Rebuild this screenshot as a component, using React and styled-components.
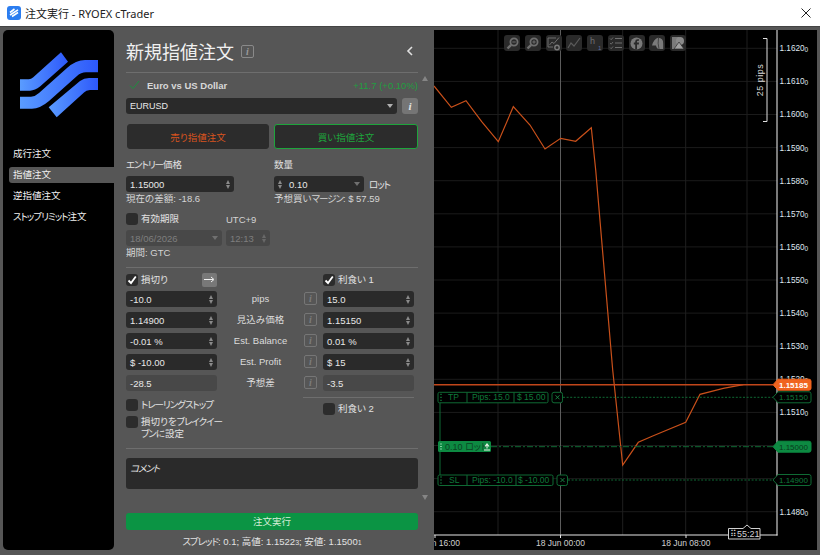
import React from "react";
import styled, { createGlobalStyle } from "styled-components";

const GlobalStyle = createGlobalStyle`
  html, body { margin: 0; padding: 0; background: #565656; }
  body {
    font-family: "Liberation Sans", "Noto Sans CJK JP", sans-serif;
    font-size: 9.5px;
    font-feature-settings: "palt";
    color: #e2e2e2;
  }
`;

const Shell = styled.div`
  width: 820px;
  height: 555px;
  display: flex;
  flex-direction: column;
  overflow: hidden;
`;

const TitleBar = styled.div`
  height: 26px;
  background: #fff;
  display: flex;
  align-items: center;
  padding: 0 9px 0 7px;
  gap: 4px;
  color: #222;
  font-size: 11px;
  font-family: "Noto Sans", "Noto Sans CJK JP", sans-serif;
`;

const TitleText = styled.span`
  flex: 1;
`;

const Body = styled.div`
  flex: 1;
  display: flex;
  padding: 3px 3px 5px 3px;
  background: #565656;
  border-top: 1px solid #444;
  min-height: 0;
`;

const Sidebar = styled.nav`
  width: 111px;
  background: #000;
  border-radius: 5px;
  padding-top: 22px;
  box-sizing: border-box;
`;

const LogoWrap = styled.div`
  padding-left: 17px;
  height: 66px;
  margin-bottom: 28px;
`;

const NavList = styled.div`
  display: flex;
  flex-direction: column;
  gap: 5px;
  padding-left: 6px;
`;

const NavItem = styled.div`
  height: 16px;
  line-height: 16px;
  padding-left: 4px;
  color: #f0f0f0;
  border-radius: 3px 0 0 3px;
  background: ${(p) => (p.$active ? "#565656" : "transparent")};
`;

const Narrow = styled.span`
  letter-spacing: -1px;
`;

const Panel = styled.div`
  position: relative;
  width: 320px;
  padding: 0 16px 0 12px;
  box-sizing: border-box;
`;

const Header = styled.div`
  height: 42px;
  display: flex;
  align-items: center;
  gap: 7px;
  border-bottom: 1px solid #6e6e6e;
`;

const Heading = styled.h1`
  margin: 0;
  font-size: 18px;
  font-weight: 400;
  color: #f0f0f0;
  font-feature-settings: normal;
`;

const BackChevron = styled.svg`
  margin-left: auto;
  margin-right: 4px;
`;

const InfoBadge = styled.span`
  width: 13px;
  height: 13px;
  flex: none;
  box-sizing: border-box;
  border: 1px solid #8a8a8a;
  border-radius: 2px;
  color: #9a9a9a;
  font: italic 700 10px/11px "Liberation Serif", serif;
  text-align: center;
  display: inline-block;
`;

const SymbolRow = styled.div`
  margin-top: 5px;
  height: 14px;
  display: flex;
  align-items: center;
  padding-left: 3px;
`;

const SymbolName = styled.span`
  margin-left: 7px;
  flex: 1;
  font-weight: 700;
  color: #d8d8d8;
`;

const Change = styled.span`
  color: #1f9f40;
`;

const SelectRow = styled.div`
  margin-top: 6px;
  display: flex;
  gap: 5px;
  font-size: 9px;
`;

const Field = styled.div`
  height: 16px;
  width: ${(p) => p.$w || "100%"};
  flex: ${(p) => (p.$grow ? 1 : "none")};
  box-sizing: border-box;
  border-radius: 3px;
  background: ${(p) => (p.$off || p.$plain ? "#484848" : "#2a2a2a")};
  color: ${(p) => (p.$off ? "#7e7e7e" : "#e8e8e8")};
  display: flex;
  align-items: center;
  padding: 0 4px;
  gap: 4px;
`;

const FieldValue = styled.span`
  flex: 1;
  white-space: nowrap;
  margin-left: ${(p) => p.$indent || 0}px;
`;

const Caret = styled.span`
  width: 0;
  height: 0;
  border-left: 3px solid transparent;
  border-right: 3px solid transparent;
  border-top: 4px solid ${(p) => (p.$dim ? "#707070" : "#b0b0b0")};
`;

const StepperBox = styled.span`
  display: flex;
  flex-direction: column;
  gap: 1px;
`;

const StepUp = styled.span`
  width: 0;
  height: 0;
  border-left: 2.5px solid transparent;
  border-right: 2.5px solid transparent;
  border-bottom: 4px solid ${(p) => (p.$dim ? "#686868" : "#8a8a8a")};
`;

const StepDown = styled(StepUp)`
  border-bottom: 0;
  border-top: 4px solid ${(p) => (p.$dim ? "#686868" : "#8a8a8a")};
`;

const InfoButton = styled.span`
  width: 16px;
  height: 16px;
  border-radius: 3px;
  background: #757575;
  color: #e4e4e4;
  font: italic 700 11px/16px "Liberation Serif", serif;
  text-align: center;
`;

const SideTabs = styled.div`
  margin-top: 10px;
  margin-left: 1px;
  display: flex;
  gap: 5px;
`;

const SideTab = styled.div`
  height: 25px;
  box-sizing: border-box;
  width: ${(p) => p.$w};
  background: #2c2c2c;
  border-radius: 3px;
  border: 1px solid ${(p) => (p.$active ? "#1ea53c" : "#2c2c2c")};
  color: ${(p) => p.$color};
  display: flex;
  align-items: center;
  justify-content: center;
`;

const OrderGrid = styled.div`
  margin-top: 9px;
  display: grid;
  grid-template-columns: 148px 1fr;
`;

const FormColumn = styled.div`
  display: flex;
  flex-direction: column;
`;

const FieldLabel = styled.div`
  height: 14px;
  line-height: 14px;
  margin-bottom: 4px;
`;

const Hint = styled.div`
  height: 12px;
  line-height: 12px;
  margin-top: 1px;
  color: #d4d4d4;
`;

const InlineRow = styled.div`
  display: flex;
  align-items: center;
  gap: 5px;
`;

const ExpiryHead = styled.div`
  margin-top: 7px;
  height: 14px;
  display: flex;
  align-items: center;
`;

const UtcLabel = styled.span`
  margin-left: auto;
  width: 192px;
  color: #d4d4d4;
`;

const ExpiryFields = styled.div`
  margin-top: 4px;
  display: flex;
  gap: 4px;
`;

const Divider = styled.div`
  height: 1px;
  background: #6e6e6e;
  margin-top: ${(p) => p.$mt}px;
`;

const CheckLabel = styled.label`
  display: flex;
  align-items: ${(p) => (p.$top ? "flex-start" : "center")};
  gap: 3px;
  color: #e2e2e2;
  line-height: 12px;
  white-space: nowrap;
`;

const Box = styled.span`
  width: 12px;
  height: 12px;
  flex: none;
  background: #2c2c2c;
  border-radius: 3px;
  display: flex;
  align-items: center;
  justify-content: center;
`;

const ProtectionGrid = styled.div`
  margin-top: ${(p) => p.$mt}px;
  display: grid;
  grid-template-columns: 91px 87px 13px 91px;
  row-gap: 5px;
`;

const GridCell = styled.div`
  grid-column: ${(p) => p.$col};
  grid-row: 1;
  display: flex;
  align-items: center;
  height: 15px;
  justify-content: space-between;
  padding-left: ${(p) => p.$indent || 0}px;
`;

const RowLabel = styled.div`
  height: 16px;
  line-height: 15px;
  text-align: center;
  white-space: nowrap;
  color: #dcdcdc;
`;

const RowInfo = styled(InfoBadge)`
  margin-top: 1px;
  color: #7c7c7c;
  border-color: #767676;
`;

const RightInput = styled(Field)`
  margin-left: 6px;
`;

const ArrowButton = styled.span`
  width: 15px;
  height: 14px;
  border-radius: 2px;
  background: #787878;
  display: flex;
  align-items: center;
  justify-content: center;
`;

const ExtrasRow = styled.div`
  display: grid;
  grid-template-columns: 177px 111px;
`;

const ExtrasLeft = styled.div`
  margin-top: 8px;
  display: flex;
  flex-direction: column;
  gap: 5px;
`;

const ExtrasRight = styled.div`
  margin-top: 6px;
`;

const ExtrasCheck = styled.div`
  margin: 5px 0 0 20px;
`;

const Comment = styled.div`
  margin-top: 9px;
  height: 31px;
  box-sizing: border-box;
  background: #2a2a2a;
  border-radius: 3px;
  padding: 3px 4px;
  font-style: italic;
  color: #e8e8e8;
`;

const SubmitButton = styled.div`
  margin-top: 24px;
  height: 17px;
  line-height: 17px;
  background: #0b9444;
  border-radius: 3px;
  text-align: center;
  color: #d8efd8;
`;

const Stats = styled.div`
  margin-top: 4px;
  text-align: center;
  color: #e2e2e2;
`;

const Small = styled.span`
  font-size: 7px;
`;

const ScrollArrow = styled.span`
  position: absolute;
  right: 6px;
  top: ${(p) => p.$top}px;
  width: 0;
  height: 0;
  border-left: 3px solid transparent;
  border-right: 3px solid transparent;
  ${(p) => (p.$down ? "border-top: 5px solid #858585;" : "border-bottom: 5px solid #858585;")}
`;

const Chart = styled.div`
  position: relative;
  width: 383px;
  background: #000;
  overflow: hidden;
  flex: none;
`;

const ChartSvg = styled.svg`
  display: block;
  font-family: "Liberation Sans", "Noto Sans CJK JP", sans-serif;
  font-feature-settings: "palt";
`;

const ChartToolbar = styled.div`
  position: absolute;
  left: 70px;
  top: 5px;
  display: flex;
  gap: 4.75px;
`;

const ToolButton = styled.span`
  width: 16px;
  height: 16px;
  border-radius: 3px;
  background: #2a2a2a;
  display: flex;
  align-items: center;
  justify-content: center;
  & > svg { opacity: 0.72; }
`;

const Logo = () => (
  <svg width="78" height="66" viewBox="20 52 78 66">
    <defs>
      <linearGradient id="band" x1="0" x2="1" y1="0" y2="0">
        <stop offset="0" stopColor="#5a9cff" />
        <stop offset="1" stopColor="#2d58fb" />
      </linearGradient>
    </defs>
    <path fill="url(#band)" d="M20 79.3 H29 Q31 79.3 33 77.6 L61 52.3 L68 61.7 L40 86.6 Q35 90.7 30 90.7 H20 Z" />
    <path fill="url(#band)" d="M20 96.7 H31 Q35 96.7 39 93 L67 68 Q76 60 85 60 H98 V72.3 H86 Q81 72.3 77 76 L49 101 Q40 108.7 32 108.7 H20 Z" />
    <path fill="url(#band)" d="M98 78 H89 Q84 78 80 81 L48.7 107.3 L56.7 117.3 L84 92.5 Q86 90 90 90 H98 Z" />
  </svg>
);

const AppIcon = () => (
  <svg width="14" height="14" viewBox="0 0 14 14">
    <rect width="14" height="14" rx="3" fill="#2b7df0" />
    <path d="M3 6.5 L7.5 3 M3 9 L11 3.8 M5 10.5 L11 6.5" stroke="#fff" strokeWidth="1.6" fill="none" />
  </svg>
);

const CheckMark = () => (
  <svg width="10" height="10" viewBox="0 0 10 10">
    <path d="M1.5 5.5 L4 8 L8.8 1.5" stroke="#fff" strokeWidth="1.8" fill="none" />
  </svg>
);

const CheckBox = ({ checked, children, top }) => (
  <CheckLabel $top={top}>
    <Box>{checked && <CheckMark />}</Box>
    <span>{children}</span>
  </CheckLabel>
);

const Stepper = ({ dim }) => (
  <StepperBox>
    <StepUp $dim={dim} />
    <StepDown $dim={dim} />
  </StepperBox>
);

const rows = [
  { left: "-10.0", label: "pips", right: "15.0" },
  { left: "1.14900", label: "見込み価格", right: "1.15150" },
  { left: "-0.01 %", label: "Est. Balance", right: "0.01 %" },
  { left: "$ -10.00", label: "Est. Profit", right: "$ 15" },
  { left: "-28.5", label: "予想差", right: "-3.5", plain: true },
];

const ZoomIcon = ({ plus }) => (
  <svg width="13" height="13" viewBox="0 0 13 13">
    <circle cx="8" cy="5" r="3.6" fill="none" stroke="#8a8a8a" strokeWidth="1.8" />
    <path d="M5.2 7.8 L1.5 11.5" stroke="#8a8a8a" strokeWidth="2.4" />
    <path d={plus ? "M6.3 5 H9.7 M8 3.3 V6.7" : "M6.3 5 H9.7"} stroke="#8a8a8a" strokeWidth="1" />
  </svg>
);

const tools = [
  <ZoomIcon key="out" />,
  <ZoomIcon key="in" plus />,
  <svg key="cfg" width="15" height="15" viewBox="0 0 15 15">
    <path d="M10 2 H2 V11 H7" fill="none" stroke="#8a8a8a" strokeWidth="1" />
    <path d="M3.5 9 L6 6 L8 7.5 L13 1.5" fill="none" stroke="#8a8a8a" strokeWidth="1" />
    <circle cx="11" cy="11.5" r="2.2" fill="none" stroke="#9a9a9a" strokeWidth="1.4" />
  </svg>,
  <svg key="line" width="14" height="14" viewBox="0 0 14 14">
    <path d="M1 12 L4 7 L7 10 L13 2" fill="none" stroke="#6e6e6e" strokeWidth="1.2" />
  </svg>,
  <svg key="tf" width="15" height="15" viewBox="0 0 15 15">
    <text x="2" y="8" fontSize="9" fill="#8a8a8a" fontFamily="Liberation Sans">h</text>
    <text x="10" y="14" fontSize="6" fill="#6f86c8" fontFamily="Liberation Sans">1</text>
  </svg>,
  <svg key="list" width="14" height="14" viewBox="0 0 14 14">
    <path d="M1 2.5 L2.2 3.7 L4 1.5 M1 7 L2.2 8.2 L4 6 M1 11.5 L2.2 12.7 L4 10.5" fill="none" stroke="#8a8a8a" strokeWidth="0.9" />
    <path d="M6 2.5 H13 M6 7 H13 M6 11.5 H13" stroke="#8a8a8a" strokeWidth="1" />
  </svg>,
  <svg key="fb" width="13" height="13" viewBox="0 0 13 13">
    <circle cx="6.5" cy="6.5" r="6" fill="#9a9a9a" />
    <path d="M7 12.5 V7.5 H8.8 L9 5.6 H7 V4.6 Q7 3.7 8 3.7 H9 V2.2 H7.6 Q5.2 2.2 5.2 4.5 V5.6 H3.8 V7.5 H5.2 V12.5 Z" fill="#2b2b2b" />
  </svg>,
  <svg key="head" width="13" height="13" viewBox="0 0 13 13">
    <path d="M7 0.8 Q12.4 1 12.2 6.5 L12.2 12 H7 Q5 10 5 8.5 L1 8.5 Q2.5 2.5 7 0.8 Z" fill="#9a9a9a" />
    <path d="M7.5 1 Q6.5 6 8 12" stroke="#2b2b2b" strokeWidth="0.7" fill="none" />
  </svg>,
  <svg key="shapes" width="14" height="14" viewBox="0 0 14 14">
    <rect x="1" y="1" width="7" height="12" fill="#9a9a9a" />
    <circle cx="9" cy="5" r="4" fill="#b0b0b0" />
    <path d="M3 13 L8 6 L13 13 Z" fill="#d0d0d0" stroke="#2b2b2b" strokeWidth="0.7" />
  </svg>,
];

const priceLine =
  "434,86 451.3,107.3 466,100.7 481.7,121.7 498.3,141.7 513.3,106.7 530,125 545,149 560.7,138.3 575.7,141.3 591.3,127.7 595.7,170 612.7,370 622.7,465 638.3,442.3 653.3,435.7 685.7,422.3 700,394.3 723.3,388.3 743.3,384.7";

const gridX = [498, 622.7, 685.7, 747];
const ticks = [
  "1.1620", "1.1610", "1.1600", "1.1590", "1.1580", "1.1570", "1.1560", "1.1550",
  "1.1540", "1.1530", "1.1520", "1.1510", null, null, "1.1480",
];

const orderGreen = "#0f6a34";

const OrderTag = ({ y, cells, closeX, endX }) => {
  let x = 438;
  return (
    <g fontSize="8.5" fill="#0f7a3a">
      <rect x="438" y={y - 5} width={endX - 438} height="10.5" rx="1.5" fill="#000" stroke={orderGreen} />
      {cells.map(([w, label, pad]) => {
        const cx = x + pad;
        x += w;
        return (
          <g key={label}>
            <text x={cx} y={y + 3}>{label}</text>
            {x < endX - 1 && <line x1={x} x2={x} y1={y - 5} y2={y + 5.5} stroke={orderGreen} />}
          </g>
        );
      })}
      <path d={`M440 ${y - 3} h2 M440 ${y} h2 M440 ${y + 3} h2`} stroke={orderGreen} />
      <rect x={closeX} y={y - 5} width="10.5" height="10.5" rx="2" fill="#000" stroke={orderGreen} />
      <path d={`M${closeX + 3.5} ${y - 2} l4 4 m0 -4 l-4 4`} stroke="#1c8f4a" strokeWidth="0.9" />
      <line x1={closeX + 11} x2="773" y1={y} y2={y} stroke={orderGreen} strokeDasharray="2 1.6" />
    </g>
  );
};

const PriceTag = ({ y, fill, stroke, color, label, bold }) => (
  <g>
    <path
      d={`M773 ${y} L778 ${y - 5.5} H809 Q811 ${y - 5.5} 811 ${y - 3.5} V${y + 3.5} Q811 ${y + 5.5} 809 ${y + 5.5} H778 Z`}
      fill={fill}
      stroke={stroke}
    />
    <text x="779" y={y + 3} fontSize="8" fill={color} fontWeight={bold ? 700 : 400}>{label}</text>
  </g>
);

const ChartDrawing = () => (
  <ChartSvg width="383" height="520" viewBox="434 30 383 520">
    {ticks.map((t, i) => (
      <line key={i} x1="434" x2="777" y1={48.3 + 33.1 * i} y2={48.3 + 33.1 * i} stroke="#1b1b1b" />
    ))}
    {gridX.map((x) => (
      <line key={x} x1={x} x2={x} y1="30" y2="535" stroke="#1f1f1f" />
    ))}
    <line x1="560.5" x2="560.5" y1="30" y2="535" stroke="#5c5c5c" />

    <path d="M440 397 V480" stroke={orderGreen} fill="none" />
    <polyline points={priceLine} fill="none" stroke="#c9501a" strokeWidth="1.2" />
    <line x1="434" x2="773" y1="384.7" y2="384.7" stroke="#c2461a" strokeWidth="1.6" />

    <OrderTag
      y={397.3}
      endX={548}
      closeX={552}
      cells={[[29, "TP", 10], [47, "Pips: 15.0", 5], [34, "$ 15.00", 3]]}
    />
    <OrderTag
      y={480}
      endX={553}
      closeX={557}
      cells={[[29, "SL", 11], [49, "Pips: -10.0", 5], [37, "$ -10.00", 2]]}
    />
    <line x1="491" x2="773" y1="446.7" y2="446.7" stroke={orderGreen} strokeDasharray="6 2 2 2" />
    <rect x="438" y="441" width="53" height="11" rx="1.5" fill="#0d8a42" />
    <path d="M440 444 h2 M440 446.5 h2 M440 449 h2" stroke="#7fd09d" />
    <text x="445" y="450" fontSize="9" fill="#0a4422">0.10 ロット</text>
    <path d="M484 450 H490 M487 448.5 V445 M485 446.5 L487 444 L489 446.5" stroke="#e8f5e8" strokeWidth="1.1" fill="none" />

    <line x1="434" x2="777.5" y1="535" y2="535" stroke="#e6e6e6" />
    <line x1="777" x2="777" y1="30" y2="535.5" stroke="#f4f4f4" />
    {[435, 560.5, 686].map((x) => (
      <line key={x} x1={x} x2={x} y1="535" y2="538" stroke="#e6e6e6" />
    ))}
    <text x="460" y="546" fontSize="8.5" fill="#d0d0d0" textAnchor="end">18 Jun 16:00</text>
    <text x="560.5" y="546" fontSize="8.5" fill="#d0d0d0" textAnchor="middle">18 Jun 00:00</text>
    <text x="686" y="546" fontSize="8.5" fill="#d0d0d0" textAnchor="middle">18 Jun 08:00</text>

    {ticks.map(
      (t, i) =>
        t && (
          <text key={t} x="779.5" y={51.2 + 33.1 * i} fontSize="8.2" fill="#dfe7f0">
            {t}
            <tspan fontSize="6.5" dy="1">0</tspan>
          </text>
        )
    )}

    <PriceTag y={397.3} fill="#000" stroke={orderGreen} color="#0f7a3a" label="1.15150" />
    <PriceTag y={446.7} fill="#0d8a42" stroke="#0d8a42" color="#083a1c" label="1.15000" />
    <PriceTag y={480} fill="#000" stroke={orderGreen} color="#0f7a3a" label="1.14900" />
    <PriceTag y={384.7} fill="#f0641f" stroke="#f0641f" color="#fff" label="1.15185" bold />

    <path d="M763 38.5 H767 V121.5 H763" fill="none" stroke="#e0e0e0" strokeWidth="1" />
    <text transform="translate(763 80) rotate(-90)" fontSize="9" fill="#d8d8d8" textAnchor="middle" letterSpacing="0.5">25 pips</text>

    <path d="M728.5 528.5 H743 L747 525 L751 528.5 H760 V539 H728.5 Z" fill="#000" stroke="#d0d0d0" />
    <text x="730" y="537" fontSize="9" fill="#d4d4d4">⠿55:21</text>
  </ChartSvg>
);

const App = () => (
  <Shell>
    <GlobalStyle />
    <TitleBar>
      <AppIcon />
      <TitleText>注文実行 - RYOEX cTrader</TitleText>
      <svg width="10" height="10" viewBox="0 0 10 10">
        <path d="M0.5 0.5 L9.5 9.5 M9.5 0.5 L0.5 9.5" stroke="#222" strokeWidth="1" />
      </svg>
    </TitleBar>
    <Body>
      <Sidebar>
        <LogoWrap>
          <Logo />
        </LogoWrap>
        <NavList>
          <NavItem>成行注文</NavItem>
          <NavItem $active>指値注文</NavItem>
          <NavItem>逆指値注文</NavItem>
          <NavItem><Narrow>ストップリミット</Narrow>注文</NavItem>
        </NavList>
      </Sidebar>

      <Panel>
        <Header>
          <Heading>新規指値注文</Heading>
          <InfoBadge>i</InfoBadge>
          <BackChevron width="8" height="10" viewBox="0 0 8 10">
            <path d="M6 1 L2 5 L6 9" fill="none" stroke="#e0e0e0" strokeWidth="1.6" />
          </BackChevron>
        </Header>
        <ScrollArrow $top={46} />
        <ScrollArrow $top={465} $down />

        <SymbolRow>
          <svg width="11" height="10" viewBox="0 0 11 10">
            <path d="M1 5.5 L4 8.5 L10 1" fill="none" stroke="#1c8f3e" strokeWidth="1" />
          </svg>
          <SymbolName>Euro vs US Dollar</SymbolName>
          <Change>+11.7 (+0.10%)</Change>
        </SymbolRow>

        <SelectRow>
          <Field $grow>
            <FieldValue>EURUSD</FieldValue>
            <Caret />
          </Field>
          <InfoButton>i</InfoButton>
        </SelectRow>

        <SideTabs>
          <SideTab $w="142px" $color="#d9541e">売り指値注文</SideTab>
          <SideTab $w="144px" $color="#1ea53c" $active>買い指値注文</SideTab>
        </SideTabs>

        <OrderGrid>
          <FormColumn>
            <FieldLabel><Narrow>エントリー</Narrow>価格</FieldLabel>
            <Field $w="108px">
              <FieldValue>1.15000</FieldValue>
              <Stepper />
            </Field>
            <Hint>現在の差額: -18.6</Hint>
          </FormColumn>
          <FormColumn>
            <FieldLabel>数量</FieldLabel>
            <InlineRow>
              <Field $w="90px">
                <Stepper />
                <FieldValue $indent={3}>0.10</FieldValue>
                <Caret $dim />
              </Field>
              <Narrow>ロット</Narrow>
            </InlineRow>
            <Hint>予想買い<Narrow>マージン</Narrow>: $ 57.59</Hint>
          </FormColumn>
        </OrderGrid>

        <ExpiryHead>
          <CheckBox>有効期限</CheckBox>
          <UtcLabel>UTC+9</UtcLabel>
        </ExpiryHead>
        <ExpiryFields>
          <Field $w="96px" $off>
            <FieldValue>18/06/2026</FieldValue>
            <Caret $dim />
          </Field>
          <Field $w="44px" $off>
            <FieldValue>12:13</FieldValue>
            <Stepper dim />
          </Field>
        </ExpiryFields>
        <Hint>期間: GTC</Hint>

        <Divider $mt={8} />

        <ProtectionGrid $mt={4}>
          <GridCell $col="1">
            <CheckBox checked>損切り</CheckBox>
            <ArrowButton>
              <svg width="11" height="7" viewBox="0 0 11 7">
                <path d="M0 3.5 H9 M7 1 L10 3.5 L7 6" fill="none" stroke="#f0f0f0" strokeWidth="1" />
              </svg>
            </ArrowButton>
          </GridCell>
          <GridCell $col="4" $indent={6}>
            <CheckBox checked>利食い 1</CheckBox>
          </GridCell>
        </ProtectionGrid>

        <ProtectionGrid $mt={4}>
          {rows.map((r) => (
            <React.Fragment key={r.label}>
              <Field $plain={r.plain}>
                <FieldValue>{r.left}</FieldValue>
                {!r.plain && <Stepper />}
              </Field>
              <RowLabel>{r.label}</RowLabel>
              <RowInfo>i</RowInfo>
              <RightInput $w="91px" $plain={r.plain}>
                <FieldValue>{r.right}</FieldValue>
                {!r.plain && <Stepper />}
              </RightInput>
            </React.Fragment>
          ))}
        </ProtectionGrid>

        <ExtrasRow>
          <ExtrasLeft>
            <CheckBox><Narrow>トレーリングストップ</Narrow></CheckBox>
            <CheckBox top>
              損切りを<Narrow>ブレイクイー</Narrow>
              <br />
              <Narrow>ブン</Narrow>に設定
            </CheckBox>
          </ExtrasLeft>
          <ExtrasRight>
            <Divider $mt={0} />
            <ExtrasCheck>
              <CheckBox>利食い 2</CheckBox>
            </ExtrasCheck>
          </ExtrasRight>
        </ExtrasRow>

        <Divider $mt={8} />
        <Comment><Narrow>コメント</Narrow></Comment>
        <SubmitButton>注文実行</SubmitButton>
        <Stats>
          <Narrow>スプレッド</Narrow>: 0.1; 高値: 1.1522<Small>3</Small>; 安値: 1.1500<Small>1</Small>
        </Stats>
      </Panel>

      <Chart>
        <ChartDrawing />
        <ChartToolbar>
          {tools.map((icon, i) => (
            <ToolButton key={i}>{icon}</ToolButton>
          ))}
        </ChartToolbar>
      </Chart>
    </Body>
  </Shell>
);

export default App;
